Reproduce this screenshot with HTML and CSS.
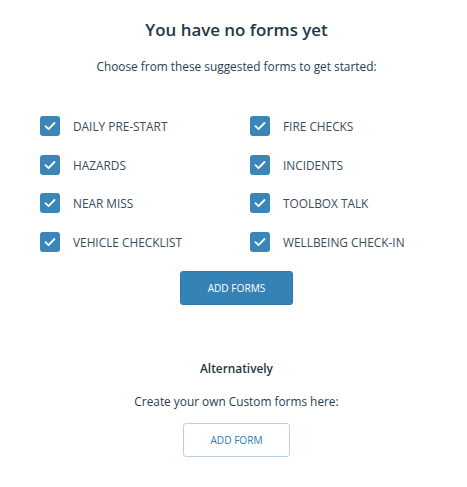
FILE: index.html
```html
<!DOCTYPE html>
<html>
<head>
<meta charset="utf-8">
<link rel="stylesheet" href="styles.css">
</head>
<body>
<div class="page">
  <h1 class="title">You have no forms yet</h1>
  <p class="subtitle">Choose from these suggested forms to get started:</p>
  <div class="grid">
    <label class="item"><span class="box"><svg viewBox="0 0 20 20" width="20" height="20"><path d="M5.5 10.2l3 3 6-6.2" fill="none" stroke="#fff" stroke-width="1.8" stroke-linecap="round" stroke-linejoin="round"/></svg></span><span class="label">DAILY PRE-START</span></label>
    <label class="item"><span class="box"><svg viewBox="0 0 20 20" width="20" height="20"><path d="M5.5 10.2l3 3 6-6.2" fill="none" stroke="#fff" stroke-width="1.8" stroke-linecap="round" stroke-linejoin="round"/></svg></span><span class="label">FIRE CHECKS</span></label>
    <label class="item"><span class="box"><svg viewBox="0 0 20 20" width="20" height="20"><path d="M5.5 10.2l3 3 6-6.2" fill="none" stroke="#fff" stroke-width="1.8" stroke-linecap="round" stroke-linejoin="round"/></svg></span><span class="label">HAZARDS</span></label>
    <label class="item"><span class="box"><svg viewBox="0 0 20 20" width="20" height="20"><path d="M5.5 10.2l3 3 6-6.2" fill="none" stroke="#fff" stroke-width="1.8" stroke-linecap="round" stroke-linejoin="round"/></svg></span><span class="label">INCIDENTS</span></label>
    <label class="item"><span class="box"><svg viewBox="0 0 20 20" width="20" height="20"><path d="M5.5 10.2l3 3 6-6.2" fill="none" stroke="#fff" stroke-width="1.8" stroke-linecap="round" stroke-linejoin="round"/></svg></span><span class="label">NEAR MISS</span></label>
    <label class="item"><span class="box"><svg viewBox="0 0 20 20" width="20" height="20"><path d="M5.5 10.2l3 3 6-6.2" fill="none" stroke="#fff" stroke-width="1.8" stroke-linecap="round" stroke-linejoin="round"/></svg></span><span class="label">TOOLBOX TALK</span></label>
    <label class="item"><span class="box"><svg viewBox="0 0 20 20" width="20" height="20"><path d="M5.5 10.2l3 3 6-6.2" fill="none" stroke="#fff" stroke-width="1.8" stroke-linecap="round" stroke-linejoin="round"/></svg></span><span class="label">VEHICLE CHECKLIST</span></label>
    <label class="item"><span class="box"><svg viewBox="0 0 20 20" width="20" height="20"><path d="M5.5 10.2l3 3 6-6.2" fill="none" stroke="#fff" stroke-width="1.8" stroke-linecap="round" stroke-linejoin="round"/></svg></span><span class="label">WELLBEING CHECK-IN</span></label>
  </div>
  <div class="actions">
    <button class="btn btn-primary">ADD FORMS</button>
  </div>
  <h2 class="alt">Alternatively</h2>
  <p class="create">Create your own Custom forms here:</p>
  <div class="actions">
    <button class="btn btn-outline">ADD FORM</button>
  </div>
</div>
</body>
</html>
```

FILE: styles.css
```css
* { box-sizing: border-box; }
html, body { margin: 0; padding: 0; background: #fff; }
body {
  font-family: "Open Sans", "Liberation Sans", sans-serif;
  color: #2b3e4f;
}
.page {
  width: 467px;
  padding-top: 17px;
  padding-left: 6px;
  text-align: center;
}
.title {
  margin: 0;
  font-size: 16.9px;
  font-weight: 600;
  line-height: 25px;
  color: #243746;
}
.subtitle {
  margin: 15px 0 0;
  font-size: 11.85px;
  line-height: 18px;
  color: #2b3e4f;
}
.grid {
  margin-top: 41px;
  padding-left: 34px;
  display: grid;
  grid-template-columns: 210px 1fr;
  row-gap: 18.5px;
  text-align: left;
}
.item {
  display: flex;
  align-items: center;
  height: 20px;
}
.box {
  width: 20px;
  height: 20px;
  border-radius: 3px;
  background: #3a86b8;
  display: flex;
  flex-shrink: 0;
}
.label {
  margin-left: 13px;
  font-size: 11.85px;
  color: #3b4c5b;
}
.actions {
  display: flex;
  justify-content: center;
}
.grid + .actions { margin-top: 19px; }
.btn {
  height: 34px;
  border-radius: 3px;
  font-family: "Open Sans", "Liberation Sans", sans-serif;
  font-size: 10.15px;
  padding: 0;
  cursor: pointer;
}
.btn-primary {
  width: 113px;
  background: #3583b5;
  border: 1px solid #2f78a8;
  color: #fff;
}
.btn-outline {
  width: 107px;
  background: #fff;
  border: 1px solid #b9d3e6;
  color: #2f7db2;
}
.alt {
  margin: 54px 0 0;
  font-size: 11.85px;
  font-weight: 600;
  line-height: 18px;
  color: #243746;
}
.create {
  margin: 15px 0 0;
  font-size: 11.85px;
  line-height: 18px;
}
.create + .actions { margin-top: 13px; }
```
